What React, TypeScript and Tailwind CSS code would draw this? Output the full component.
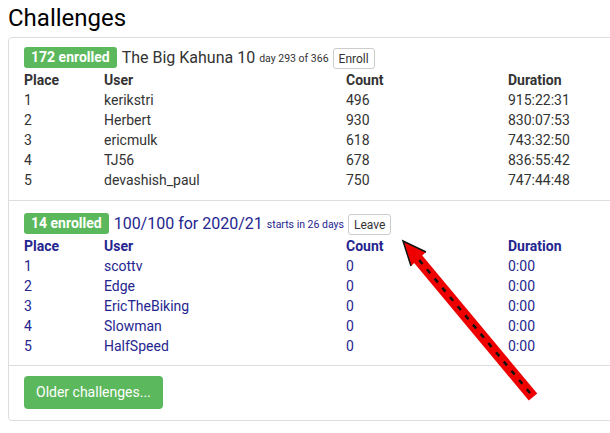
import React from 'react';

interface Row {
    place: number;
    user: string;
    count: string;
    duration: string;
}

interface Challenge {
    enrolled: number;
    title: string;
    note: string;
    action: string;
    joined: boolean;
    rows: Row[];
}

const challenges: Challenge[] = [
    {
        enrolled: 172,
        title: 'The Big Kahuna 10',
        note: 'day 293 of 366',
        action: 'Enroll',
        joined: false,
        rows: [
            { place: 1, user: 'kerikstri', count: '496', duration: '915:22:31' },
            { place: 2, user: 'Herbert', count: '930', duration: '830:07:53' },
            { place: 3, user: 'ericmulk', count: '618', duration: '743:32:50' },
            { place: 4, user: 'TJ56', count: '678', duration: '836:55:42' },
            { place: 5, user: 'devashish_paul', count: '750', duration: '747:44:48' },
        ],
    },
    {
        enrolled: 14,
        title: '100/100 for 2020/21',
        note: 'starts in 26 days',
        action: 'Leave',
        joined: true,
        rows: [
            { place: 1, user: 'scottv', count: '0', duration: '0:00' },
            { place: 2, user: 'Edge', count: '0', duration: '0:00' },
            { place: 3, user: 'EricTheBiking', count: '0', duration: '0:00' },
            { place: 4, user: 'Slowman', count: '0', duration: '0:00' },
            { place: 5, user: 'HalfSpeed', count: '0', duration: '0:00' },
        ],
    },
];

function ChallengeBlock({ c, first }: { c: Challenge; first: boolean }) {
    const color = c.joined ? 'text-[#25258f]' : 'text-[#333333]';
    return (
        <div className={`px-[15px] ${first ? 'pt-[9px] pb-[10px]' : 'pt-[12px] pb-[9px] border-t border-[#dddddd]'}`}>
            <div className="flex h-[23px] items-start">
                <span className="flex h-[21px] items-center rounded-[3px] bg-[#5cb85c] px-[7px] text-[14px] font-bold text-white">
                    {c.enrolled} enrolled
                </span>
                <span className={`ml-[5px] text-[16px] leading-[21px] ${color}`}>{c.title}</span>
                <span className={`ml-[4px] mt-[3px] text-[10.5px] leading-[18px] ${color}`}>{c.note}</span>
                <button className="ml-[4px] mt-[1px] h-[21px] rounded-[3px] border border-[#cccccc] bg-white px-[5px] text-[12px] text-[#333333]">
                    {c.action}
                </button>
            </div>
            <div className={`grid grid-cols-[80px_242px_162px_1fr] text-[14px] leading-[20px] ${color}`}>
                <div className="font-bold">Place</div>
                <div className="font-bold">User</div>
                <div className="font-bold">Count</div>
                <div className="font-bold">Duration</div>
                {c.rows.map((r) => (
                    <React.Fragment key={r.place}>
                        <div>{r.place}</div>
                        <div>{r.user}</div>
                        <div>{r.count}</div>
                        <div>{r.duration}</div>
                    </React.Fragment>
                ))}
            </div>
        </div>
    );
}

export default function App() {
    return (
        <div className="relative h-[433px] w-[610px] overflow-hidden bg-white font-['Roboto',sans-serif]">
            <h1 className="ml-[8px] pt-[2px] text-[24px] leading-[32px] text-black">Challenges</h1>
            <div className="ml-[8px] mt-[3px] w-[640px] rounded-[4px] border border-[#dddddd]">
                {challenges.map((c, i) => (
                    <ChallengeBlock key={c.title} c={c} first={i === 0} />
                ))}
                <div className="border-t border-[#dddddd] px-[15px] pb-[11px] pt-[10px]">
                    <button className="h-[33px] rounded-[4px] bg-[#5cb85c] px-[12px] text-[14px] text-white">
                        Older challenges...
                    </button>
                </div>
            </div>
            <svg className="absolute left-0 top-0" width="610" height="433" viewBox="0 0 610 433">
                <line x1="533" y1="397" x2="413" y2="253" stroke="#ee0000" strokeWidth="11" />
                <line x1="530" y1="393" x2="415" y2="255" stroke="#111111" strokeWidth="2.5" strokeDasharray="5 7" />
                <polygon points="403,241 426,252 411,266" fill="#ee0000" />
                <polyline points="411,266 403,241 426,252" fill="none" stroke="#111111" strokeWidth="1.5" />
            </svg>
        </div>
    );
}
